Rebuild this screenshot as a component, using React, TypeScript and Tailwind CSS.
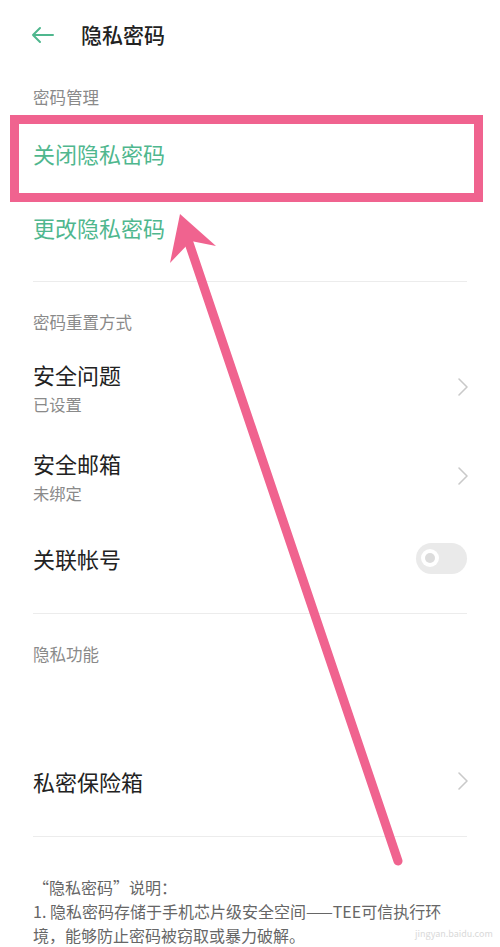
import React from "react";

const font = { fontFamily: '"Noto Sans CJK SC", "Noto Sans", sans-serif' };

function Chevron() {
    return (
        <svg width="12" height="20" viewBox="0 0 12 20" className="shrink-0">
            <polyline points="2,2 10,10 2,18" fill="none" stroke="#c9c9c9" strokeWidth="1.6" strokeLinecap="round" strokeLinejoin="round" />
        </svg>
    );
}

function SectionLabel({ text, className }: { text: string; className: string }) {
    return (
        <div className={`px-[33px] ${className}`}>
            <div className="h-[40px] flex items-center text-[16.5px] text-[#8a8a8a]">{text}</div>
        </div>
    );
}

function Divider() {
    return <div className="mx-[33px] h-px bg-[#ececec]" />;
}

function NavRow({ title, sub }: { title: string; sub: string }) {
    return (
        <div className="flex items-center justify-between pl-[33px] pr-[31px] py-[17px]">
            <div className="flex flex-col">
                <span className="h-[30px] flex items-center text-[22px] text-[#222]">{title}</span>
                <span className="h-[20px] mt-[5px] flex items-center text-[16.3px] text-[#8a8a8a]">{sub}</span>
            </div>
            <Chevron />
        </div>
    );
}

export default function App() {
    return (
        <div className="relative w-[500px] h-[947px] overflow-hidden bg-white" style={font}>
            {/* header */}
            <div className="h-[70px] flex items-center pl-[31px]">
                <svg width="24" height="18" viewBox="0 0 24 18">
                    <path d="M22 9H2M9 2L2 9l7 7" fill="none" stroke="#4fb78e" strokeWidth="2" strokeLinecap="round" strokeLinejoin="round" />
                </svg>
                <span className="ml-[26px] text-[21px] font-medium text-[#222]">隐私密码</span>
            </div>

            <SectionLabel text="密码管理" className="h-[54px] pt-[7px]" />

            <div className="h-[58px] flex items-center px-[33px] text-[22px] text-[#4fb78e]">关闭隐私密码</div>
            <div className="h-[90px] flex items-center px-[33px] text-[22px] text-[#4fb78e]">更改隐私密码</div>
            <div className="pt-[9px]">
                <Divider />
            </div>

            <SectionLabel text="密码重置方式" className="h-[60px] pt-[20px]" />

            <NavRow title="安全问题" sub="已设置" />
            <NavRow title="安全邮箱" sub="未绑定" />

            <div className="h-[76px] flex items-center justify-between pl-[33px] pr-[33px]">
                <span className="text-[22px] text-[#222]">关联帐号</span>
                <div className="w-[51px] h-[31px] rounded-full bg-[#eaeaea] flex items-center pl-[5px]">
                    <div className="w-[18px] h-[18px] rounded-full bg-white flex items-center justify-center">
                        <div className="w-[10px] h-[10px] rounded-full bg-[#dcdcdc]" />
                    </div>
                </div>
            </div>
            <div className="pt-[17px]">
                <Divider />
            </div>

            <SectionLabel text="隐私功能" className="h-[112px] pt-[20px]" />

            <div className="h-[110px] flex items-center justify-between pl-[33px] pr-[31px]">
                <span className="text-[22px] text-[#222]">私密保险箱</span>
                <Chevron />
            </div>
            <Divider />

            {/* footer note */}
            <div className="pt-[38px] px-[33px] text-[16px] leading-[24px] text-[#666]">
                <div className="whitespace-nowrap">“隐私密码”说明：</div>
                <div className="whitespace-nowrap">1. 隐私密码存储于手机芯片级安全空间——TEE可信执行环</div>
                <div className="whitespace-nowrap">境，能够防止密码被窃取或暴力破解。</div>
            </div>

            {/* watermark */}
            <div className="absolute left-[415px] top-[929px] text-[9px] leading-[10px] text-[#d9d9d9] pointer-events-none">
                jingyan.baidu.com
            </div>

            {/* annotation: highlight box */}
            <div className="absolute left-[10px] top-[115px] w-[473px] h-[87px] border-[9px] border-[#f0638f] pointer-events-none" />

            {/* annotation: arrow */}
            <svg className="absolute inset-0 pointer-events-none" width="500" height="947" viewBox="0 0 500 947">
                <line x1="188" y1="240" x2="398" y2="861" stroke="#f0638f" strokeWidth="9" strokeLinecap="round" />
                <polygon points="180,214 216,246 191,241 170,263" fill="#f0638f" />
            </svg>
        </div>
    );
}
